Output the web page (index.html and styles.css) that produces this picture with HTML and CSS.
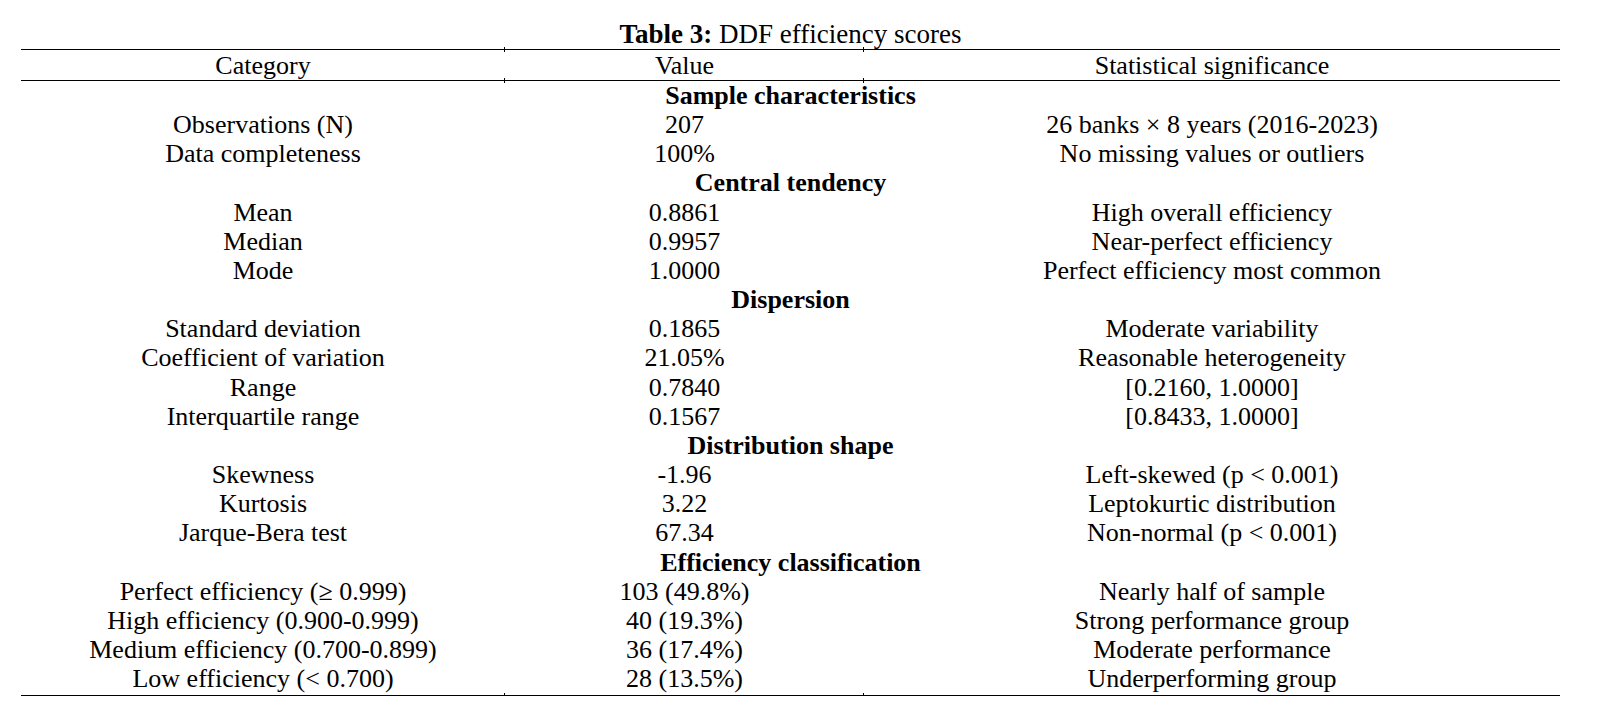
FILE: index.html
```html
<!DOCTYPE html>
<html lang="en">
<head>
<meta charset="utf-8">
<title>Table 3: DDF efficiency scores</title>
<link rel="stylesheet" href="styles.css">
</head>
<body>
<div class="page">
  <div class="caption"><b>Table 3:</b> DDF efficiency scores</div>
  <table class="ddf">
    <colgroup><col class="c1"><col class="c2"><col class="c3"></colgroup>
    <thead>
      <tr><th>Category</th><th>Value</th><th>Statistical significance</th></tr>
    </thead>
    <tbody>
      <tr class="section"><td colspan="3">Sample characteristics</td></tr>
      <tr><td>Observations (N)</td><td>207</td><td>26 banks × 8 years (2016-2023)</td></tr>
      <tr><td>Data completeness</td><td>100%</td><td>No missing values or outliers</td></tr>
      <tr class="section"><td colspan="3">Central tendency</td></tr>
      <tr><td>Mean</td><td>0.8861</td><td>High overall efficiency</td></tr>
      <tr><td>Median</td><td>0.9957</td><td>Near-perfect efficiency</td></tr>
      <tr><td>Mode</td><td>1.0000</td><td>Perfect efficiency most common</td></tr>
      <tr class="section"><td colspan="3">Dispersion</td></tr>
      <tr><td>Standard deviation</td><td>0.1865</td><td>Moderate variability</td></tr>
      <tr><td>Coefficient of variation</td><td>21.05%</td><td>Reasonable heterogeneity</td></tr>
      <tr><td>Range</td><td>0.7840</td><td>[0.2160, 1.0000]</td></tr>
      <tr><td>Interquartile range</td><td>0.1567</td><td>[0.8433, 1.0000]</td></tr>
      <tr class="section"><td colspan="3">Distribution shape</td></tr>
      <tr><td>Skewness</td><td>-1.96</td><td>Left-skewed (p &lt; 0.001)</td></tr>
      <tr><td>Kurtosis</td><td>3.22</td><td>Leptokurtic distribution</td></tr>
      <tr><td>Jarque-Bera test</td><td>67.34</td><td>Non-normal (p &lt; 0.001)</td></tr>
      <tr class="section"><td colspan="3">Efficiency classification</td></tr>
      <tr><td>Perfect efficiency (≥ 0.999)</td><td>103 (49.8%)</td><td>Nearly half of sample</td></tr>
      <tr><td>High efficiency (0.900-0.999)</td><td>40 (19.3%)</td><td>Strong performance group</td></tr>
      <tr><td>Medium efficiency (0.700-0.899)</td><td>36 (17.4%)</td><td>Moderate performance</td></tr>
      <tr class="last"><td>Low efficiency (&lt; 0.700)</td><td>28 (13.5%)</td><td>Underperforming group</td></tr>
    </tbody>
  </table>
</div>
</body>
</html>
```

FILE: styles.css
```css
html, body {
  margin: 0;
  padding: 0;
  background: #ffffff;
}

body {
  font-family: "Liberation Serif", "Times New Roman", serif;
  color: #000000;
}

.page {
  padding: 19px 39px 0 21px;
}

.caption {
  width: 1539px;
  text-align: center;
  font-size: 27px;
  line-height: 30px;
}

.caption b {
  font-weight: bold;
}

.ddf {
  width: 1539px;
  table-layout: fixed;
  border-collapse: separate;
  border-spacing: 0;
  font-size: 26px;
}

.ddf col.c1 { width: 484px; }
.ddf col.c2 { width: 359px; }
.ddf col.c3 { width: 696px; }

.ddf th {
  position: relative;
  font-weight: normal;
  text-align: center;
  line-height: 29px;
  padding: 1px 0 0;
  border-top: 1px solid #000000;
  border-bottom: 1px solid #000000;
  white-space: nowrap;
}

.ddf th:not(:last-child)::before,
.ddf th:not(:last-child)::after,
.ddf .last td:not(:last-child)::after {
  content: "";
  position: absolute;
  right: 0;
  width: 1px;
  height: 5px;
  background: #000000;
}

.ddf th:not(:last-child)::before {
  top: -3px;
}

.ddf th:not(:last-child)::after,
.ddf .last td:not(:last-child)::after {
  bottom: -3px;
}

.ddf td {
  text-align: center;
  padding: 0;
  line-height: 29.16px;
  white-space: nowrap;
}

.ddf .section td {
  font-weight: bold;
}

.ddf .last td {
  position: relative;
  padding-bottom: 1.5px;
  border-bottom: 1px solid #000000;
}
```
